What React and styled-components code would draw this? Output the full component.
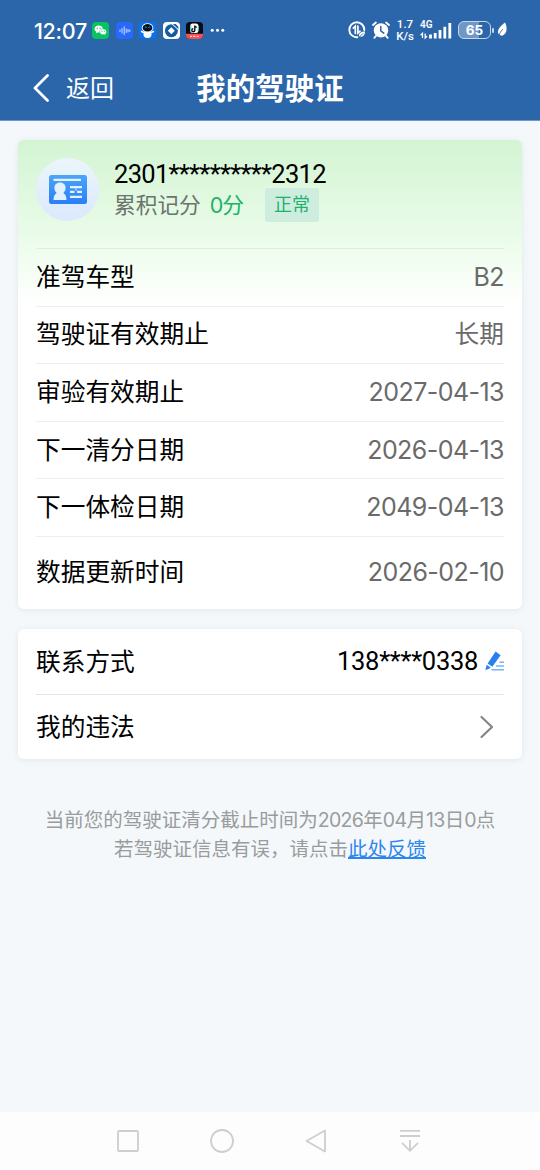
import React from "react";
import styled, { createGlobalStyle } from "styled-components";

const GlobalStyle = createGlobalStyle`
  * {
    box-sizing: border-box;
  }
  body {
    margin: 0;
    background: #f4f8fa;
    font-family: "Noto Sans CJK SC", sans-serif;
  }
  svg {
    display: block;
    flex-shrink: 0;
  }
`;

const Page = styled.div`
  width: 540px;
  height: 1170px;
  display: flex;
  flex-direction: column;
  overflow: hidden;
`;

const Header = styled.header`
  height: 121px;
  flex-shrink: 0;
  background: #2b65aa;
  border-bottom: 1px solid #6e98c8;
  color: #fff;
`;

const StatusBar = styled.div`
  height: 60px;
  padding: 0 33px 0 34px;
  display: flex;
  align-items: center;
  justify-content: space-between;
`;

const StatusGroup = styled.div`
  display: flex;
  align-items: center;
  gap: ${(props) => props.$gap}px;
`;

const Clock = styled.span`
  width: 51.5px;
  padding-top: 1px;
  font-family: Inter, sans-serif;
  font-size: 21.5px;
  font-weight: 500;
  line-height: 24px;
  letter-spacing: -0.3px;
  white-space: nowrap;
`;

const Speed = styled.div`
  width: 18px;
  display: flex;
  flex-direction: column;
  align-items: center;
  font-family: Roboto, sans-serif;
  font-size: 11.5px;
  font-weight: 500;
  line-height: 12px;
`;

const Signal = styled.div`
  width: 32px;
  height: 20px;
  font-family: Roboto, sans-serif;
  font-size: 10px;
  font-weight: 600;
  line-height: 10px;
  display: grid;

  > * {
    grid-area: 1 / 1;
  }
`;

const Battery = styled.div`
  display: flex;
  align-items: center;
  gap: 1px;
  margin-right: -3px;

  span {
    width: 33px;
    height: 18px;
    border: 1.5px solid #c7d8ea;
    border-radius: 6px;
    background: linear-gradient(90deg, #7098c7 65%, #2b65aa 65%);
    font-family: Inter, sans-serif;
    font-size: 13.5px;
    font-weight: 700;
    line-height: 16px;
    text-align: center;
  }

  &::after {
    content: "";
    width: 2px;
    height: 5px;
    border-radius: 1px;
    background: #c7d8ea;
  }
`;

const TitleBar = styled.div`
  height: 56px;
  padding: 0 32px;
  display: grid;
  grid-template-columns: 120px 1fr 120px;
  align-items: center;
`;

const Back = styled.div`
  display: flex;
  align-items: center;
  gap: 16px;
  font-size: 24px;

  span {
    line-height: 36px;
    padding-bottom: 3px;
  }
`;

const Title = styled.h1`
  margin: 0;
  padding-bottom: 4px;
  font-size: 29.5px;
  font-weight: 700;
  line-height: 40px;
  text-align: center;
  white-space: nowrap;
`;

const Content = styled.main`
  flex: 1;
  padding: 19px 18px 0;
`;

const Card = styled.section`
  margin-bottom: 20.5px;
  padding: 0 18px;
  border-radius: 6px;
  background: ${(props) =>
    props.$green
      ? "linear-gradient(180deg, #d3f4d3 0, #ebfcea 100px, #fff 163px)"
      : "#fff"};
  box-shadow: 0 1px 6px rgba(60, 100, 100, 0.1);
`;

const Summary = styled.div`
  height: 108px;
  padding-top: 18px;
  display: flex;
  gap: 15px;
`;

const Avatar = styled.div`
  width: 63px;
  height: 63px;
  border-radius: 50%;
  background: linear-gradient(180deg, #ecf5fb, #dbe9fd);
  display: flex;
  align-items: center;
  justify-content: center;
`;

const Number = styled.span`
  font-family: Inter, sans-serif;
  font-size: ${(props) => props.$size || 25}px;
  letter-spacing: ${(props) => props.$spacing || 0}px;
`;

const Masked = styled.span`
  font-family: Roboto, sans-serif;
  font-size: 25.5px;
  letter-spacing: ${(props) => props.$spacing || 0}px;
`;

const LicenseId = styled.div`
  height: 30px;
  line-height: 32px;
  color: #000;
`;

const Points = styled.div`
  height: 34px;
  display: flex;
  align-items: center;
  font-size: 21.7px;
  line-height: 32px;
  color: #6b736d;
`;

const PointsText = styled.span`
  padding-bottom: 2px;

  strong {
    margin-left: 9px;
    font-weight: 400;
    color: #20b26c;
  }
`;

const Tag = styled.span`
  width: 54px;
  height: 34px;
  margin-left: 21px;
  border-radius: 3px;
  background: #ceeddf;
  color: #20b26c;
  font-size: 18px;
  line-height: 31px;
  text-align: center;
`;

const Row = styled.div`
  height: ${(props) => props.$height || 57.6}px;
  border-top: ${(props) => (props.$first ? "0" : "1px")} solid
    ${(props) => props.$line || "rgba(70, 90, 90, 0.09)"};
  display: flex;
  align-items: center;
  justify-content: space-between;
  font-size: 24.7px;
  line-height: 36px;
  color: #000;
`;

const Label = styled.span`
  padding-bottom: ${(props) => props.$lift ?? 5}px;
`;

const Value = styled.span`
  display: flex;
  align-items: center;
  gap: 7px;
  padding-bottom: ${(props) => props.$lift || 0}px;
  color: ${(props) => (props.$dark ? "#000" : "#6a6a6a")};
`;

const Note = styled.p`
  margin: 46px -18px 0;
  font-size: 19.5px;
  line-height: 28px;
  text-align: center;
  white-space: nowrap;
  color: #999c9d;

  a {
    color: #2c86ee;
    text-decoration: underline;
    text-underline-offset: 1px;
    text-decoration-thickness: 1.5px;
  }
`;

const NavBar = styled.nav`
  height: 58px;
  padding: 0 117px 0 115px;
  background: #fdfdfd;
  display: flex;
  align-items: center;
  justify-content: space-between;
`;

const rows = [
  { label: "准驾车型", value: "B2", latin: true },
  { label: "驾驶证有效期止", value: "长期" },
  { label: "审验有效期止", value: "2027-04-13", latin: true },
  { label: "下一清分日期", value: "2026-04-13", latin: true },
  { label: "下一体检日期", value: "2049-04-13", latin: true },
  { label: "数据更新时间", value: "2026-02-10", latin: true, height: 73 },
];

function WechatIcon() {
  return (
    <svg width="17" height="17" viewBox="0 0 17 17">
      <rect width="17" height="17" rx="4" fill="#08c35f" />
      <path d="M2.5 7.1c0-2 1.8-3.5 4.2-3.5s4.2 1.5 4.2 3.5-1.8 3.5-4.2 3.5l-1.2-.2-1.6.8.3-1.4a3.3 3.3 0 0 1-1.7-2.7z" fill="#fff" />
      <path d="M7.6 9.8c0-1.7 1.5-2.9 3.5-2.9s3.5 1.2 3.5 2.9c0 .9-.5 1.7-1.3 2.2l.2 1.2-1.4-.7-1 .2c-2 0-3.5-1.2-3.5-2.9z" fill="#fff" stroke="#08c35f" strokeWidth=".5" />
      <g fill="#08a853">
        <circle cx="5.3" cy="6.2" r=".6" />
        <circle cx="8.1" cy="6.2" r=".6" />
        <circle cx="10" cy="9.2" r=".5" />
        <circle cx="12.3" cy="9.2" r=".5" />
      </g>
    </svg>
  );
}

function VoiceIcon() {
  return (
    <svg width="17" height="17" viewBox="0 0 17 17">
      <rect width="17" height="17" rx="4" fill="#2769fb" />
      <path d="M4 8v1.5M6 6.5v4.5M8.2 4.8v7.7M10.2 7v3.5M12 7.5v2.5M13.8 8v1.5" stroke="#cfe0ff" strokeWidth="1" strokeLinecap="round" />
    </svg>
  );
}

function RobotIcon() {
  return (
    <svg width="17" height="17" viewBox="0 0 17 17">
      <rect width="17" height="17" rx="4" fill="#0873f6" />
      <ellipse cx="8.5" cy="12.2" rx="4" ry="3.8" fill="#fff" />
      <path d="M2.5 9.5l3 1.3M14.5 9.5l-3 1.3" stroke="#fff" strokeWidth="1.5" strokeLinecap="round" />
      <ellipse cx="8.5" cy="5.8" rx="5.8" ry="4.5" fill="#fff" />
      <ellipse cx="8.5" cy="5.8" rx="4.9" ry="3.7" fill="#07131d" />
      <path d="M5.8 5.7l1-.8 1 .8M9.3 5.7l1-.8 1 .8" stroke="#38c6d5" strokeWidth=".8" fill="none" />
    </svg>
  );
}

function BankIcon() {
  return (
    <svg width="17" height="17" viewBox="0 0 17 17">
      <rect width="17" height="17" rx="4" fill="#fff" />
      <circle cx="8.4" cy="8.7" r="6.5" fill="#125ca1" />
      <path d="M9 1.5l6.5 6" stroke="#fff" strokeWidth="1.2" />
      <path d="M10 2l5.4 5.2V4.8L12.7 2z" fill="#125ca1" />
      <path d="M8.3 5.2l3.5 3.5-3.5 3.5-3.5-3.5z" fill="#fff" />
    </svg>
  );
}

function VideoIcon() {
  return (
    <svg width="17" height="17" viewBox="0 0 17 17">
      <rect width="17" height="17" rx="4" fill="#090b10" />
      <path d="M0 11.8h17V13a4 4 0 0 1-4 4H4a4 4 0 0 1-4-4z" fill="#f15254" />
      <rect x="4.2" y="1.5" width="8.2" height="9.4" rx="2.5" fill="#fff" />
      <path d="M5 3.5L4.4 8.5M12 9l.6-5" stroke="#27d9df" strokeWidth="1" />
      <path d="M8.8 3.5v4.7a1.5 1.5 0 1 1-1.5-1.5M8.8 3.5c.2 1.2.9 1.7 2 1.8" fill="none" stroke="#111" strokeWidth="1.4" />
      <path d="M4 14.3h2M7 14.3h2.5M10.7 14.3h2" stroke="#ffd2d2" strokeWidth="1.3" />
    </svg>
  );
}

function MoreIcon() {
  return (
    <svg width="15" height="17" viewBox="0 0 15 17" fill="#fff">
      <circle cx="2.2" cy="8.2" r="1.5" />
      <circle cx="7.5" cy="8.2" r="1.5" />
      <circle cx="12.8" cy="8.2" r="1.5" />
    </svg>
  );
}

function DataSaverIcon() {
  return (
    <svg width="18" height="18" viewBox="0 0 18 18" fill="none" stroke="#fff" strokeLinecap="round">
      <path d="M9.5 16.2A7.5 7.5 0 1 1 16.3 9" strokeWidth="1.9" />
      <path d="M5.3 7.2l2-2v7.3M9.9 5v7.2l2.2-2" strokeWidth="1.7" />
      <path d="M11 15.5c-.5-3.5 2-5 6-5 .1 4-2.4 6-6 5z" fill="#fff" stroke="none" />
      <path d="M10.8 16.6l3.8-3.8" stroke="#2b65aa" strokeWidth=".9" />
    </svg>
  );
}

function AlarmIcon() {
  return (
    <svg width="18" height="18" viewBox="0 0 18 18" fill="none" stroke="#fff" strokeLinecap="round">
      <circle cx="9" cy="9.4" r="7.2" fill="#fff" stroke="none" />
      <path d="M1 4L3.9 1.5M17 4l-2.9-2.5" strokeWidth="1.8" />
      <path d="M4 14.8l-1.7 2M14 14.8l1.7 2" strokeWidth="1.8" />
      <path d="M8.8 5.4v4.4l3 2.3" stroke="#2b65aa" strokeWidth="1.5" />
    </svg>
  );
}

function SignalIcon() {
  return (
    <svg width="32" height="20" viewBox="0 0 32 20" fill="none" stroke="#fff">
      <path d="M.6 15.3l1.9-1.9V18M5.2 13.4V18l1.9-1.9" strokeWidth="1.3" />
      <path d="M10.5 18.5v-4M15.2 18.5V13M20 18.5V10M24.8 18.5V6.7M29.8 18.5V3" strokeWidth="2.8" />
    </svg>
  );
}

function LeafIcon() {
  return (
    <svg width="10" height="16" viewBox="0 0 10 16">
      <path d="M8 .5c2.8 5.5 2 12-3.5 13.2C-1.5 12 .2 6 8 .5z" fill="#fff" />
      <path d="M1.6 15.2c.8-3.8 2.2-6 4.2-8" fill="none" stroke="#2b65aa" strokeWidth=".9" />
    </svg>
  );
}

function LicenseIcon() {
  return (
    <svg width="38" height="29" viewBox="0 0 38 29">
      <defs>
        <linearGradient id="licenseBlue" x1="0" y1="0" x2="0" y2="1">
          <stop offset="0" stopColor="#4da5f8" />
          <stop offset="1" stopColor="#287ff8" />
        </linearGradient>
      </defs>
      <rect width="38" height="29" rx="2.5" fill="url(#licenseBlue)" />
      <g fill="#e2f1fd">
        <rect x="4.5" y="3.8" width="27.5" height="2.2" rx=".5" />
        <path d="M11 7.5c3.3 0 5.6 2.3 5.6 5.5 0 2.3-1.1 4-2.3 5 2.2 1.2 3.2 3.8 3.2 7h-13c0-3.2 1-5.8 3.2-7-1.2-1-2.3-2.7-2.3-5 0-3.2 2.3-5.5 5.6-5.5z" />
        <path d="M21 11h12v2.2H21zM21 15.8h4.5V18H21zM28 15.8h5V18h-5zM21 20.8h12V23H21z" />
        <path d="M26 13h2v2.8h-2z" opacity=".5" />
      </g>
    </svg>
  );
}

function EditIcon() {
  return (
    <svg width="19" height="20" viewBox="0 0 19 20">
      <path d="M10.6.6l5 3.6-8.3 11.6-4.7-3.4z" fill="#287fee" />
      <path d="M1.7 13.7l4.2 3L.3 19.2z" fill="#287fee" />
      <path d="M14.5 11.2H19M11 15h8M6.5 18.7H19" stroke="#79b2f5" strokeWidth="1.5" />
    </svg>
  );
}

function StatusIcons() {
  return (
    <StatusBar>
      <StatusGroup $gap={6.5}>
        <Clock>12:07</Clock>
        <WechatIcon />
        <VoiceIcon />
        <RobotIcon />
        <BankIcon />
        <VideoIcon />
        <MoreIcon />
      </StatusGroup>
      <StatusGroup $gap={6}>
        <DataSaverIcon />
        <AlarmIcon />
        <Speed>
          <span>1.7</span>
          <span>K/s</span>
        </Speed>
        <Signal>
          <span>4G</span>
          <SignalIcon />
        </Signal>
        <Battery>
          <span>65</span>
        </Battery>
        <LeafIcon />
      </StatusGroup>
    </StatusBar>
  );
}

function App() {
  return (
    <Page>
      <GlobalStyle />
      <Header>
        <StatusIcons />
        <TitleBar>
          <Back>
            <svg width="18" height="28" viewBox="0 0 18 28" fill="none" stroke="#fff" strokeWidth="2.8" strokeLinecap="round" strokeLinejoin="round">
              <path d="M15.5 1.5L3 14l12.5 12.5" />
            </svg>
            <span>返回</span>
          </Back>
          <Title>我的驾驶证</Title>
        </TitleBar>
      </Header>

      <Content>
        <Card $green>
          <Summary>
            <Avatar>
              <LicenseIcon />
            </Avatar>
            <div>
              <LicenseId>
                <Masked $spacing={-0.7}>2301**********2312</Masked>
              </LicenseId>
              <Points>
                <PointsText>
                  累积记分
                  <strong>
                    <Number $size={21.5} $spacing={-1}>0</Number>分
                  </strong>
                </PointsText>
                <Tag>正常</Tag>
              </Points>
            </div>
          </Summary>
          {rows.map((row) => (
            <Row key={row.label} $height={row.height}>
              <Label>{row.label}</Label>
              <Value $lift={row.latin ? 1 : 5}>
                {row.latin ? (
                  <Number $spacing={-0.55}>{row.value}</Number>
                ) : (
                  row.value
                )}
              </Value>
            </Row>
          ))}
        </Card>

        <Card>
          <Row $first $height={64.5}>
            <Label $lift={3}>联系方式</Label>
            <Value $dark $lift={1}>
              <Masked $spacing={-0.3}>138****0338</Masked>
              <EditIcon />
            </Value>
          </Row>
          <Row $height={65} $line="#e2e5e5">
            <Label $lift={3}>我的违法</Label>
            <svg width="28" height="24" viewBox="0 0 28 24" fill="none" stroke="#858585" strokeWidth="2.2" strokeLinecap="round" strokeLinejoin="round">
              <path d="M5.5 2L16 12 5.5 22" />
            </svg>
          </Row>
        </Card>

        <Note>
          当前您的驾驶证清分截止时间为<Number $size={19.5} $spacing={-0.65}>2026</Number>年
          <Number $size={19.5} $spacing={-0.65}>04</Number>月
          <Number $size={19.5} $spacing={-0.65}>13</Number>日
          <Number $size={19.5} $spacing={-0.65}>0</Number>点
          <br />
          若驾驶证信息有误，请点击<a>此处反馈</a>
        </Note>
      </Content>

      <NavBar>
        <svg width="26" height="26" viewBox="0 0 26 26" fill="none" stroke="#cecece" strokeWidth="1.8">
          <rect x="3" y="3" width="20" height="20" rx="1" />
        </svg>
        <svg width="26" height="26" viewBox="0 0 26 26" fill="none" stroke="#cecece" strokeWidth="1.8">
          <circle cx="13" cy="13" r="11" />
        </svg>
        <svg width="26" height="26" viewBox="0 0 26 26" fill="none" stroke="#cecece" strokeWidth="1.8" strokeLinejoin="round">
          <path d="M22 2.5v21L3.5 13z" />
        </svg>
        <svg width="26" height="26" viewBox="0 0 26 26" fill="none" stroke="#cecece" strokeWidth="1.8">
          <path d="M3 2.8h20M3 8h20M13 12v11M5 14.8l8 8 8-8" />
        </svg>
      </NavBar>
    </Page>
  );
}

export default App;
